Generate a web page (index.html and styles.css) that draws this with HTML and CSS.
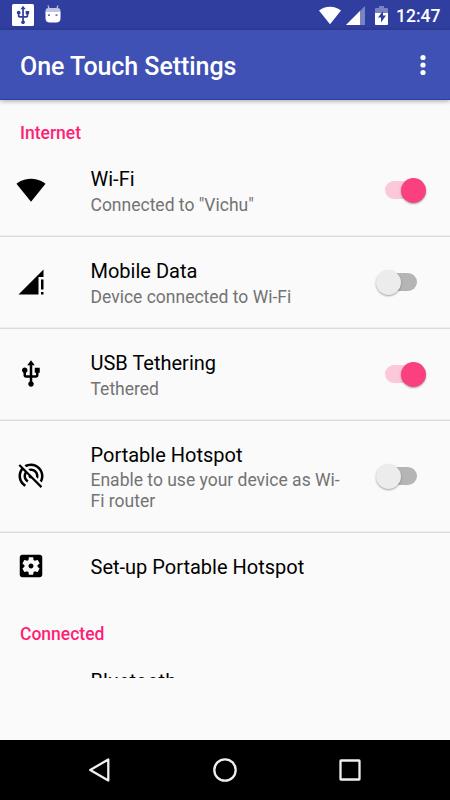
FILE: index.html
```html
<!DOCTYPE html>
<html lang="en">
<head>
<meta charset="utf-8">
<title>One Touch Settings</title>
<link rel="stylesheet" href="styles.css">
</head>
<body>
<div class="screen">
  <div class="status-bar">
    <svg class="status-usb" viewBox="0 0 22 22"><rect width="22" height="22" rx="1.5" fill="#fff"/><path transform="translate(0.6 0.8) scale(.87)" fill="#303f9f" d="M15 7v4h1v2h-3V5h2l-3-4-3 4h2v8H8v-2.070c.7-.37 1.200-1.080 1.200-1.930 0-1.210-.99-2.200-2.200-2.200-1.210 0-2.200.99-2.200 2.200 0 .85.5 1.560 1.200 1.930V13c0 1.110.89 2 2 2h3v3.050c-.71.37-1.200 1.100-1.200 1.950 0 1.220.99 2.200 2.200 2.200 1.210 0 2.200-.98 2.200-2.200 0-.85-.49-1.580-1.200-1.950V15h3c1.110 0 2-.89 2-2v-2h1V7h-4z"/></svg>
    <svg class="status-droid" viewBox="0 0 16 18"><path d="M3 .5l1.500 4M13 .5l-1.500 4" stroke="#c1c5e2" stroke-width="1.200"/><path d="M.5 8V6q0-3 3-3h9q3 0 3 3v2z" fill="#c1c5e2"/><path d="M.5 7h15v6q0 4.500-4.500 4.500H5Q.5 17.500.5 13z" fill="#fff"/><path d="M3 9.300h2v1.800H3zM10.500 9.300h2v1.800h-2z" fill="#6873bb"/></svg>
    <span class="spacer"></span>
    <svg class="status-wifi" viewBox="0 0 22 19"><path d="M11 18.200L0 4.500Q4.500.7 11 .7T22 4.500z" fill="#fff"/></svg>
    <svg class="status-cell" viewBox="0 0 19 19"><path d="M19 0v19H0z" fill="#7983c1"/><path d="M14 5v14H0z" fill="#fff"/></svg>
    <svg class="status-battery" viewBox="0 0 13 19"><path d="M0 3q0-1 1-1h3V0h5v2h3q1 0 1 1v5H0z" fill="#7983c1"/><path d="M0 7h13v11q0 1-1 1H1q-1 0-1-1z" fill="#fff"/><path d="M8 5L3 11.500h3v5l5-7H8z" fill="#303f9f"/></svg>
    <span class="clock">12:47</span>
  </div>
  <header class="app-bar">
    <h1>One Touch Settings</h1>
    <svg class="more" viewBox="0 0 6 22"><circle cx="3" cy="3.500" r="2.600"/><circle cx="3" cy="11" r="2.600"/><circle cx="3" cy="18.500" r="2.600"/></svg>
  </header>
  <main class="list">
    <h2 class="category">Internet</h2>
    <div class="row">
      <svg class="icon" viewBox="0 0 24 24"><path d="M12.010 21.490L23.640 7c-.45-.34-4.930-4-11.640-4C5.280 3 .81 6.660.36 7l11.630 14.490.01.01.01-.01z"/></svg>
      <div class="text"><div class="title">Wi-Fi</div><div class="summary">Connected to "Vichu"</div></div>
      <span class="switch on"></span>
    </div>
    <div class="row divided">
      <svg class="icon" viewBox="0 0 24 24"><path d="M20 18h2v-8h-2v8zm0 4h2v-2h-2v2zM2 22h16V8h4V2L2 22z"/></svg>
      <div class="text"><div class="title">Mobile Data</div><div class="summary">Device connected to Wi-Fi</div></div>
      <span class="switch"></span>
    </div>
    <div class="row divided">
      <svg class="icon" viewBox="0 0 24 24"><path d="M15 7v4h1v2h-3V5h2l-3-4-3 4h2v8H8v-2.070c.7-.37 1.200-1.080 1.200-1.930 0-1.210-.99-2.200-2.200-2.200-1.210 0-2.200.99-2.200 2.200 0 .85.5 1.560 1.200 1.930V13c0 1.110.89 2 2 2h3v3.050c-.71.37-1.200 1.100-1.200 1.950 0 1.220.99 2.200 2.200 2.200 1.210 0 2.200-.98 2.200-2.200 0-.85-.49-1.580-1.200-1.950V15h3c1.110 0 2-.89 2-2v-2h1V7h-4z"/></svg>
      <div class="text"><div class="title">USB Tethering</div><div class="summary">Tethered</div></div>
      <span class="switch on"></span>
    </div>
    <div class="row divided tall">
      <svg class="icon" viewBox="0 0 24 24"><path d="M17.560 14.240c.28-.69.44-1.450.44-2.240 0-3.310-2.690-6-6-6-.79 0-1.550.16-2.240.44l1.620 1.620c.2-.03.41-.06.62-.06 2.210 0 4 1.790 4 4 0 .21-.02.42-.05.63l1.610 1.610zM12 4c4.420 0 8 3.580 8 8 0 1.350-.35 2.620-.95 3.740l1.470 1.470C21.460 15.690 22 13.910 22 12c0-5.520-4.480-10-10-10-1.910 0-3.690.55-5.210 1.470l1.460 1.460C9.370 4.340 10.650 4 12 4zM3.270 2.500L2 3.770l2.100 2.100C2.790 7.570 2 9.690 2 12c0 3.700 2.010 6.920 4.990 8.650l1-1.730C5.610 17.530 4 14.960 4 12c0-1.760.57-3.380 1.530-4.690l1.430 1.440C6.360 9.680 6 10.800 6 12c0 2.220 1.210 4.150 3 5.190l1-1.740c-1.190-.7-2-1.970-2-3.450 0-.65.17-1.250.44-1.790l1.580 1.580L10 12c0 1.100.9 2 2 2l.21-.02.01.01 7.510 7.510L21 20.230 4.270 3.500l-1-1z"/></svg>
      <div class="text"><div class="title">Portable Hotspot</div><div class="summary">Enable to use your device as Wi-Fi router</div></div>
      <span class="switch"></span>
    </div>
    <div class="row divided short">
      <svg class="icon" viewBox="0 0 24 24"><path d="M12 10c-1.100 0-2 .9-2 2s.9 2 2 2 2-.9 2-2-.9-2-2-2zm7-7H5c-1.110 0-2 .9-2 2v14c0 1.100.89 2 2 2h14c1.110 0 2-.9 2-2V5c0-1.100-.89-2-2-2zm-1.750 9c0 .23-.02.46-.05.68l1.480 1.160c.13.11.17.3.08.45l-1.400 2.420c-.09.15-.27.21-.43.15l-1.740-.7c-.36.28-.76.51-1.180.69l-.26 1.850c-.03.17-.18.3-.35.3h-2.800c-.17 0-.32-.13-.35-.29l-.26-1.850c-.43-.18-.82-.41-1.180-.69l-1.740.7c-.16.06-.34 0-.43-.15l-1.400-2.420c-.09-.15-.05-.34.08-.45l1.480-1.160c-.03-.23-.05-.46-.05-.69 0-.23.02-.46.05-.68l-1.480-1.160c-.13-.11-.17-.3-.08-.45l1.400-2.420c.09-.15.27-.21.43-.15l1.740.7c.36-.28.76-.51 1.180-.69l.26-1.850c.03-.17.18-.3.35-.3h2.800c.17 0 .32.13.35.29l.26 1.850c.43.18.82.41 1.180.69l1.740-.7c.16-.06.34 0 .43.15l1.400 2.420c.09.15.05.34-.08.45l-1.480 1.160c.03.23.05.46.05.69z"/></svg>
      <div class="text"><div class="title">Set-up Portable Hotspot</div></div>
    </div>
    <h2 class="category">Connected</h2>
    <div class="row clipped">
      <span class="icon"></span>
      <div class="text"><div class="title">Bluetooth</div></div>
    </div>
  </main>
  <nav class="nav-bar">
    <svg viewBox="0 0 24 24"><path d="M20.300 1.500v21L2.200 12z"/></svg>
    <svg viewBox="0 0 24 24"><circle cx="12" cy="12" r="10.700"/></svg>
    <svg viewBox="0 0 24 24"><rect x="2.500" y="2.500" width="19" height="19" rx=".5"/></svg>
  </nav>
</div>
</body>
</html>
```
FILE: styles.css
```css
* { box-sizing: border-box; }
body { margin: 0; font-family: Roboto, sans-serif; }
h1, h2 { margin: 0; font-weight: 500; }
.screen {
  width: 450px;
  height: 800px;
  display: flex;
  flex-direction: column;
  overflow: hidden;
  background: #fafafa;
}
.status-bar {
  flex: none;
  height: 30px;
  display: flex;
  align-items: center;
  padding: 0 10px 0 11.5px;
  background: #303f9f;
  color: #fff;
}
.spacer { flex: 1; }
.status-usb { width: 22px; height: 22px; }
.status-droid { width: 16px; height: 18px; margin: 0 0 3px 11px; }
.status-wifi { width: 22px; height: 19px; margin-right: 5px; }
.status-cell { width: 19px; height: 19px; margin-right: 10px; }
.status-battery { width: 13px; height: 19px; margin-right: 8px; }
.clock { width: 44px; font-size: 17.5px; font-weight: 500; line-height: 30px; padding-top: 2px; white-space: nowrap; }
.app-bar {
  flex: none;
  height: 70px;
  display: flex;
  align-items: center;
  justify-content: space-between;
  padding: 4px 24.5px 0 20px;
  background: #3f51b5;
  border-bottom: 1px solid #303f9f;
  box-shadow: 0 1px 5px rgba(0, 0, 0, .35);
  color: #fff;
}
.app-bar h1 { font-size: 25px; line-height: 30px; letter-spacing: -.06px; white-space: nowrap; }
.more { width: 6px; height: 22px; margin-bottom: 3px; fill: #fff; }
.list { height: 578px; overflow: hidden; }
.category {
  height: 44px;
  padding: 22px 20px 0;
  color: #ff1f75;
  font-size: 17.5px;
  line-height: 22px;
}
.row {
  display: flex;
  align-items: center;
  height: 92px;
  padding: 0 24px 0 15.5px;
}
.divided {
  padding-bottom: 1px;
  border-top: 1px solid #dcdcdc;
  box-shadow: 0 -1px 0 #eeeeee;
}
.tall { height: 112px; }
.short { height: 69px; }
.clipped { height: 70px; }
.icon { flex: none; width: 30px; height: 30px; margin-right: 45px; fill: #000; }
.text { width: 255px; margin-top: 2px; }
.title { color: #000; font-size: 20px; line-height: 25px; }
.summary { margin-top: 3px; color: #737373; font-size: 17.5px; line-height: 21px; }
.tall .summary { margin-top: 2px; }
.short .icon { margin-bottom: 1px; }
.switch {
  position: relative;
  width: 32px;
  height: 18px;
  margin-left: auto;
  margin-right: 9px;
  border-radius: 9px;
  background: #b5b5b5;
}
.switch::after {
  content: "";
  position: absolute;
  top: -3.5px;
  left: -9.5px;
  width: 25px;
  height: 25px;
  border-radius: 50%;
  background: #ececec;
  box-shadow: 0 1px 2px rgba(0, 0, 0, .35);
}
.switch.on { background: #fbc8d9; }
.switch.on::after { left: 15.5px; background: #fb4080; }
.nav-bar {
  flex: none;
  height: 60px;
  margin-top: auto;
  display: flex;
  align-items: center;
  justify-content: center;
  gap: 101px;
  background: #000;
}
.nav-bar svg {
  width: 24px;
  height: 24px;
  fill: none;
  stroke: #efefef;
  stroke-width: 2.3;
  stroke-linejoin: round;
}
```
